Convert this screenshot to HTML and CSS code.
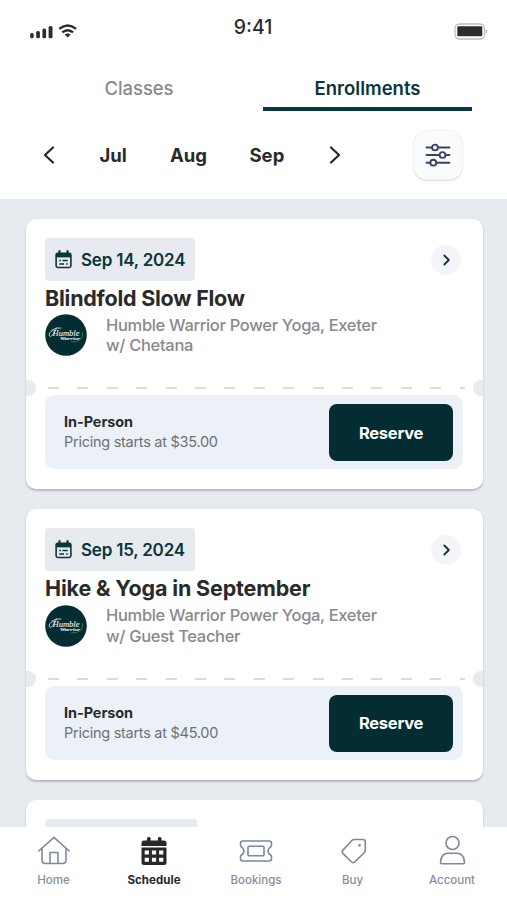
FILE: index.html
```html
<!DOCTYPE html>
<html lang="en">
<head>
<meta charset="utf-8">
<title>Schedule</title>
<link rel="stylesheet" href="styles.css">
</head>
<body>
<svg width="0" height="0" class="defs" aria-hidden="true">
  <symbol id="calendar" viewBox="0 0 16 18">
    <path d="M4.2 1v3M11.8 1v3" stroke="currentColor" stroke-width="2" stroke-linecap="round"/>
    <rect x="1" y="3" width="14" height="13.5" rx="1.6" fill="none" stroke="currentColor" stroke-width="1.5"/>
    <path d="M1 3h14v4H1z" fill="currentColor"/>
    <path d="M4 10h1.500M7 10h5M4 13.200h4.500M10.500 13.200H12" stroke="currentColor" stroke-width="1.400"/>
  </symbol>
  <symbol id="next" viewBox="0 0 30 30">
    <path d="M13.300 10.500l4.500 4.500-4.500 4.500" fill="none" stroke="#12313a" stroke-width="1.800" stroke-linecap="round" stroke-linejoin="round"/>
  </symbol>
</svg>
<div class="app">
  <header class="top">
    <div class="status">
      <svg width="49" height="18" viewBox="0 0 49 18">
        <g fill="#2b2d2d">
          <rect x="1.200" y="10" width="3.500" height="5.200" rx="1.500"/><rect x="7.200" y="8" width="3.700" height="7.200" rx="1.500"/>
          <rect x="13.400" y="5.500" width="3.700" height="9.700" rx="1.500"/><rect x="19.600" y="3" width="3.900" height="12.200" rx="1.500"/>
        </g>
        <g fill="none" stroke="#2b2d2d" stroke-width="2.500">
          <path d="M30.300 5.900q8.400-6.800 16.800 0"/>
          <path d="M33.300 9.400q5.400-4.400 10.800 0"/>
        </g>
        <path d="M35.700 11.600q3-2.200 6 0l-3 3z" fill="#2b2d2d"/>
      </svg>
      <span class="time">9:41</span>
      <svg class="battery" width="34" height="18" viewBox="0 0 34 18">
        <rect x="1" y="1" width="29.500" height="15" rx="4.500" fill="#fff" stroke="#bdbdbd" stroke-width="1.300"/>
        <rect x="3.300" y="3.300" width="25" height="10" rx="1" fill="#2b2d2d"/>
        <path d="M31.800 6.300q2.500 2.200 0 4.500z" fill="#aaa"/>
      </svg>
    </div>
    <nav class="tabs">
      <div class="tab"><span class="t-classes">Classes</span></div>
      <div class="tab active"><span class="t-enroll">Enrollments</span></div>
    </nav>
    <div class="months">
      <svg width="12" height="18" viewBox="0 0 12 18"><path d="M10 1.500L2 9l8 7.500" class="arrow"/></svg>
      <span class="jul">Jul</span><span class="aug">Aug</span><span class="sep">Sep</span>
      <svg class="arrow-next" width="12" height="18" viewBox="0 0 12 18"><path d="M2 1.500L10 9l-8 7.500" class="arrow"/></svg>
      <div class="filter">
        <svg width="26" height="24" viewBox="0 0 26 24" fill="#fafbfc" stroke="#3f4262" stroke-width="1.900" stroke-linecap="round">
          <path d="M1.500 4.500h23M1.500 12h23M1.500 19.700h23"/>
          <circle cx="10" cy="4.500" r="2.900"/><circle cx="17.500" cy="12" r="2.900"/><circle cx="8.300" cy="19.700" r="2.900"/>
        </svg>
      </div>
    </div>
  </header>
  <main class="list">
    <article class="card">
      <div class="card-head">
        <div class="chip"><svg width="17" height="19"><use href="#calendar"/></svg><span>Sep 14, 2024</span></div>
        <div class="go"><svg width="30" height="30"><use href="#next"/></svg></div>
      </div>
      <h2 class="first-title">Blindfold Slow Flow</h2>
      <div class="studio">
        <svg width="42" height="42" viewBox="0 0 42 42">
          <circle cx="21" cy="21" r="20.800" fill="#032c33"/>
          <path d="M7.500 16.500q-4 2-3.500 5 1.500 2.500 4-1t3.500-6.500M7 16q4-3 9-2" fill="none" stroke="#e3ebeb" stroke-width=".8" stroke-linecap="round"/>
          <text x="7.500" y="21.600" textLength="27" lengthAdjust="spacingAndGlyphs" class="logo-main">Humble</text>
          <text x="15" y="26" textLength="20" lengthAdjust="spacingAndGlyphs" class="logo-sub">Warrior</text>
          <path d="M37.500 18.500q1 4-1.500 6.500-4 4-9.500 2.800" fill="none" stroke="#55752f" stroke-width=".9" stroke-linecap="round"/>
        </svg>
        <p>Humble Warrior Power Yoga, Exeter<br>w/ Chetana</p>
      </div>
      <div class="tear"><i class="notch"></i><i class="dashes"></i><i class="notch right"></i></div>
      <div class="panel">
        <div class="price"><b>In-Person</b><span>Pricing starts at $35.00</span></div>
        <button>Reserve</button>
      </div>
    </article>
    <article class="card">
      <div class="card-head">
        <div class="chip"><svg width="17" height="19"><use href="#calendar"/></svg><span>Sep 15, 2024</span></div>
        <div class="go"><svg width="30" height="30"><use href="#next"/></svg></div>
      </div>
      <h2>Hike &amp; Yoga in September</h2>
      <div class="studio">
        <svg width="42" height="42" viewBox="0 0 42 42">
          <circle cx="21" cy="21" r="20.800" fill="#032c33"/>
          <path d="M7.500 16.500q-4 2-3.500 5 1.500 2.500 4-1t3.500-6.500M7 16q4-3 9-2" fill="none" stroke="#e3ebeb" stroke-width=".8" stroke-linecap="round"/>
          <text x="7.500" y="21.600" textLength="27" lengthAdjust="spacingAndGlyphs" class="logo-main">Humble</text>
          <text x="15" y="26" textLength="20" lengthAdjust="spacingAndGlyphs" class="logo-sub">Warrior</text>
          <path d="M37.500 18.500q1 4-1.500 6.500-4 4-9.500 2.800" fill="none" stroke="#55752f" stroke-width=".9" stroke-linecap="round"/>
        </svg>
        <p>Humble Warrior Power Yoga, Exeter<br>w/ Guest Teacher</p>
      </div>
      <div class="tear pink"><i class="notch"></i><i class="dashes"></i><i class="notch right"></i></div>
      <div class="panel">
        <div class="price"><b>In-Person</b><span>Pricing starts at $45.00</span></div>
        <button>Reserve</button>
      </div>
    </article>
    <article class="card"><div class="chip empty"></div></article>
  </main>
  <footer class="bar">
    <div class="item">
      <svg viewBox="0 0 34 32"><path d="M1.800 16L17 2.300 32.200 16M5 13.500V25q0 3.500 3.500 3.500h17q3.500 0 3.500-3.500V13.500M13 28.500v-11h8v11"/></svg>
      <span>Home</span>
    </div>
    <div class="item on">
      <svg viewBox="0 0 34 32">
        <g fill="#262829" stroke="none">
          <rect x="10" y="2" width="3.600" height="7" rx="1.500"/><rect x="20.900" y="2" width="3.600" height="7" rx="1.500"/>
          <path d="M4.500 11V8q0-2.500 2.500-2.500h20q2.500 0 2.500 2.500v3z"/>
          <path d="M4.500 12.600h25v14.900q0 2.500-2.500 2.500H7q-2.500 0-2.500-2.500z"/>
        </g>
        <path d="M7.700 15.500h4.200v4H7.700zM14.900 15.500h4.200v4h-4.200zM22.100 15.500h4.200v4h-4.200zM7.700 22.700h4.200v4H7.700zM14.900 22.700h4.200v4h-4.200zM22.100 22.700h4.200v4h-4.200z" fill="#fff" stroke="none"/>
      </svg>
      <span>Schedule</span>
    </div>
    <div class="item">
      <svg viewBox="0 0 34 32"><path d="M4 6h26q2.500 0 2.500 2.500v2q0 1-1 1.500-2.500 1.700-2.500 4t2.500 4q1 .5 1 1.500v2q0 2.500-2.500 2.500H4q-2.500 0-2.500-2.500v-2q0-1 1-1.500Q5 18.300 5 16t-2.500-4q-1-.5-1-1.500v-2Q1.500 6 4 6z"/><rect x="9" y="11.300" width="16" height="9.500" rx="1"/></svg>
      <span>Bookings</span>
    </div>
    <div class="item">
      <svg viewBox="0 0 34 32"><path d="M18.500 4.500H27q2.300 0 2.300 2.300v8.400q0 1.500-1 2.500L18.800 26.800q-1.700 1.700-3.400 0L7 18.600q-1.700-1.700 0-3.500L15.800 5.500q1-1 2.700-1z"/><circle cx="23.500" cy="10.300" r=".6"/></svg>
      <span>Buy</span>
    </div>
    <div class="item">
      <svg viewBox="0 0 34 32"><circle cx="17.500" cy="8" r="6.500"/><path d="M7 28.700q-1.700 0-1.500-1.700.8-8.700 7.800-8.700h8.400q7 0 7.800 8.700.2 1.700-1.500 1.700z"/></svg>
      <span>Account</span>
    </div>
  </footer>
</div>
</body>
</html>
```
FILE: styles.css
```css
* { box-sizing: border-box; }
body { margin: 0; background: #fff; font-family: Inter, "Liberation Sans", sans-serif; color: #292b2b; }
svg { display: block; flex: none; }
.defs { position: absolute; }
.app { width: 507px; height: 900px; display: flex; flex-direction: column; overflow: hidden; }

.top { height: 198.5px; flex: none; background: #fff; }
.status { height: 66px; padding: 15px 19px 0 29px; display: grid; grid-template-columns: 1fr auto 1fr; align-items: start; }
.status > svg { margin-top: 8px; }
.time { font-size: 19.5px; line-height: 24px; font-weight: 550; margin: 0 0 0 -11px; }
.status > .battery { justify-self: end; margin-top: 7.5px; }
.tabs { display: flex; gap: 19.5px; padding-left: 34.5px; height: 45px; }
.tab { width: 209px; text-align: center; font-size: 18.5px; line-height: 24px; padding-top: 10px; color: #89898e; font-weight: 500; border-bottom: 4px solid transparent; }
.tab.active { color: #0b353b; font-weight: 600; border-color: #083940; }
.t-classes { letter-spacing: -.1px; }
.t-enroll { letter-spacing: 0; }
.months { display: flex; align-items: center; height: 50px; margin-top: 19px; padding-left: 43px; font-size: 18.5px; font-weight: 650; line-height: 24px; }
.arrow { fill: none; stroke: #262829; stroke-width: 2.2; stroke-linecap: round; stroke-linejoin: round; }
.months span { flex: none; white-space: nowrap; }
.jul { margin-left: 44.5px; width: 70.5px; }
.aug { width: 79.5px; }
.sep { width: 79.5px; }
.filter { margin-left: 72px; width: 50px; height: 50px; border-radius: 14px; background: #fafbfc; border: 1px solid #f1f2f3; box-shadow: 0 1px 1px #dfe1e3; display: grid; place-items: center; }

.list { flex: 1; min-height: 0; overflow: hidden; background: #e7eaef; padding: 20px 24.5px 0 25.5px; }
.card { height: 270.5px; margin-bottom: 20px; background: #fff; border-radius: 10px; box-shadow: 0 1.5px 2px rgba(70, 80, 90, .3); padding: 19.3px 19.5px 0; }
.card-head { display: flex; justify-content: space-between; }
.chip { height: 43px; width: 150px; border-radius: 4px; background: #e7eaef; color: #0b353b; display: flex; align-items: center; padding-left: 10px; gap: 9px; font-size: 17px; font-weight: 600; letter-spacing: -.2px; white-space: nowrap; }
.chip.empty { width: 152px; }
.chip span { padding-top: 1px; }
.go { margin: 7.2px 2px 0 0; width: 30px; height: 30px; border-radius: 50%; background: #f3f5fa; }
h2 { margin: 4px 0 2.5px; font-size: 21.5px; line-height: 27px; font-weight: 650; letter-spacing: -.15px; white-space: nowrap; }
.first-title { letter-spacing: -.24px; }
.studio { display: flex; height: 42px; gap: 19px; }
.studio p { margin: 0; padding-top: .7px; font-size: 16.5px; line-height: 20.5px; color: #89898e; font-weight: 450; letter-spacing: -.32px; white-space: nowrap; }
.logo-main { font: italic 8px "Liberation Serif", serif; fill: #e8eeee; stroke: #e8eeee; stroke-width: .1px; }
.logo-sub { font: italic 5px "Liberation Serif", serif; fill: #dce5e5; stroke: #dce5e5; stroke-width: .2px; }
.tear { display: flex; align-items: center; height: 16px; margin: 23.8px -19.5px 0; }
.notch { width: 10px; height: 16px; background: #e7eaef; border-radius: 0 8px 8px 0; }
.notch.right { border-radius: 8px 0 0 8px; margin-left: auto; }
.dashes { width: 417px; height: 2px; margin-left: 12.5px; background: repeating-linear-gradient(90deg, #dddddf 0 11px, transparent 11px 29.4px); }
.pink .dashes { background: repeating-linear-gradient(90deg, #e4d6d9 0 11px, transparent 11px 29.4px); }
.panel { height: 74px; margin-top: -1px; border-radius: 9px; background: #ebf1f7; display: flex; justify-content: space-between; align-items: flex-start; padding: 9px 10px 0 19px; }
.price { display: flex; flex-direction: column; line-height: 20px; padding-top: 8px; white-space: nowrap; }
.price b { font-size: 14.5px; font-weight: 650; letter-spacing: -.08px; }
.price span { font-size: 14.5px; color: #6d7276; letter-spacing: -.27px; }
button { width: 124px; height: 57px; border: 0; border-radius: 8px; background: #032c33; color: #fff; font: 650 16.5px Inter, sans-serif; letter-spacing: -.25px; }

.bar { height: 73.5px; flex: none; background: #fff; display: grid; grid-template-columns: 104px 97px 107px 86px 113px; padding-left: 1.5px; }
.item { display: flex; flex-direction: column; align-items: center; color: #858ca2; font-size: 11.5px; line-height: 16px; font-weight: 500; padding-top: 8.5px; }
.item svg { width: 34px; height: 32px; fill: none; stroke: #7d879d; stroke-width: 1.6; stroke-linecap: round; stroke-linejoin: round; }
.item span { margin-top: 5px; }
.item.on { color: #262829; font-weight: 650; letter-spacing: .05px; }
```
